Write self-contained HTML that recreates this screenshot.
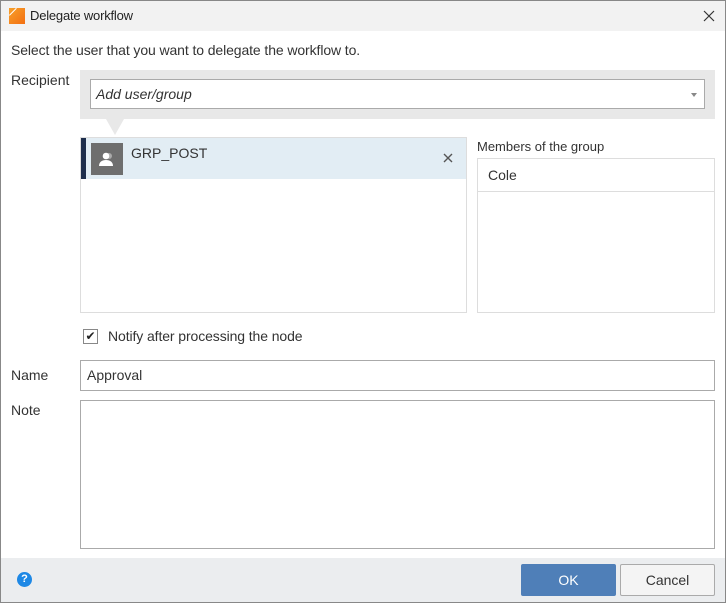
<!DOCTYPE html><html><head><style>
*{box-sizing:border-box;margin:0;padding:0}
body{width:726px;height:603px;background:#fff;font-family:"Liberation Sans",sans-serif;font-size:13.5px;color:#222;position:relative;overflow:hidden}
.a{position:absolute}
.b{border:1px solid #aaa;background:#fff}
</style></head><body>
<div class="a" style="left:0;top:0;width:726px;height:603px;border:1px solid #888"></div>
<div class="a" style="left:1px;top:1px;width:724px;height:30px;background:#f2f2f2"></div>
<div class="a" style="left:9px;top:8px;width:16px;height:16px;background:linear-gradient(135deg,#f7a02a,#f36f12)"></div>
<div class="a" style="left:9px;top:15px;width:10px;height:1px;background:#fff;transform:rotate(-45deg);transform-origin:0 0"></div>
<div class="a" style="left:30px;top:8px;font-size:13px;letter-spacing:-0.2px">Delegate workflow</div>
<svg class="a" style="left:703px;top:10px" width="12" height="12" viewBox="0 0 12 12"><path d="M1 1L11 11M11 1L1 11" stroke="#333" stroke-width="1.2"/></svg>
<div class="a" style="left:11px;top:42px;font-size:14px;color:#333;letter-spacing:-0.1px">Select the user that you want to delegate the workflow to.</div>
<div class="a" style="left:11px;top:72px;font-size:14px;color:#333">Recipient</div>
<div class="a" style="left:80px;top:70px;width:635px;height:49px;background:#e8e8e8"></div>
<div class="a b" style="left:90px;top:79px;width:615px;height:30px;padding:6px 5px;font-style:italic;font-size:14px;color:#333">Add user/group</div>
<div class="a" style="left:691px;top:93px;border:3px solid transparent;border-top:4px solid #888"></div>
<div class="a" style="left:106px;top:119px;border-left:9px solid transparent;border-right:9px solid transparent;border-top:16px solid #e8e8e8"></div>
<div class="a" style="left:80px;top:137px;width:387px;height:176px;border:1px solid #ddd"></div>
<div class="a" style="left:81px;top:138px;width:385px;height:41px;background:#e2edf4"></div>
<div class="a" style="left:81px;top:138px;width:5px;height:41px;background:#1e2e4c"></div>
<div class="a" style="left:91px;top:143px;width:32px;height:32px;background:#6e6e6e"></div>
<svg class="a" style="left:98px;top:151px" width="18" height="16" viewBox="0 0 18 16"><circle cx="11" cy="5" r="3" fill="#aaa"/><circle cx="8" cy="5" r="3.3" fill="#fff"/><path d="M1 15c0-4 3-6 7-6s7 2 7 6z" fill="#fff"/></svg>
<div class="a" style="left:131px;top:145px;font-size:14px;color:#333">GRP_POST</div>
<svg class="a" style="left:443px;top:153px" width="10" height="10" viewBox="0 0 10 10"><path d="M1 1L9 9M9 1L1 9" stroke="#555" stroke-width="1.4"/></svg>
<div class="a" style="left:477px;top:139px;font-size:13px;color:#333">Members of the group</div>
<div class="a" style="left:477px;top:158px;width:238px;height:155px;border:1px solid #ddd"></div>
<div class="a" style="left:478px;top:191px;width:236px;height:1px;background:#ddd"></div>
<div class="a" style="left:488px;top:167px;font-size:14px;color:#333">Cole</div>
<div class="a" style="left:83px;top:329px;width:15px;height:15px;border:1px solid #888;background:#fff;font-size:12px;line-height:13px;text-align:center;color:#222">✔</div>
<div class="a" style="left:108px;top:328px;font-size:14px;color:#333;letter-spacing:-0.1px">Notify after processing the node</div>
<div class="a" style="left:11px;top:367px;font-size:14px;color:#333">Name</div>
<div class="a b" style="left:80px;top:360px;width:635px;height:31px;padding:6px 6px;font-size:14px;color:#333">Approval</div>
<div class="a" style="left:11px;top:402px;font-size:14px;color:#333">Note</div>
<div class="a b" style="left:80px;top:400px;width:635px;height:149px"></div>
<div class="a" style="left:1px;top:558px;width:724px;height:44px;background:#ebedef"></div>
<div class="a" style="left:17px;top:572px;width:15px;height:15px;border-radius:50%;background:#1e88e5;color:#fff;font-size:11px;font-weight:bold;text-align:center;line-height:15px">?</div>
<div class="a" style="left:521px;top:564px;width:95px;height:32px;background:#4f7fb8;border-radius:2px;color:#fff;font-size:14px;text-align:center;line-height:32px">OK</div>
<div class="a" style="left:620px;top:564px;width:95px;height:32px;background:#f4f4f4;border:1px solid #aaa;border-radius:2px;color:#333;font-size:14px;text-align:center;line-height:30px">Cancel</div>
</body></html>
